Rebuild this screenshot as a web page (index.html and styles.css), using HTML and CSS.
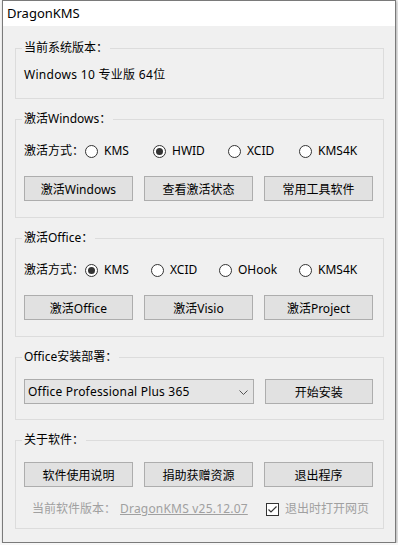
FILE: index.html
```html
<!DOCTYPE html>
<html lang="zh-CN">
<head>
    <meta charset="UTF-8">
    <meta name="viewport" content="width=device-width, initial-scale=1.0">
    <title>DragonKMS</title>
    <link rel="stylesheet" href="styles.css">
</head>
<body>

    <div class="window">
        <div class="titlebar">DragonKMS</div>

        <div class="client">

            <!-- system version -->
            <fieldset class="group group-system">
                <legend>当前系统版本：</legend>
                <div class="os-name">Windows 10 专业版 64位</div>
            </fieldset>

            <!-- windows activation -->
            <fieldset class="group group-activate">
                <legend>激活Windows：</legend>
                <div class="mode-row win-modes">
                    <span class="mode-label">激活方式：</span>
                    <span class="radio"><span class="radio-dot"></span>KMS</span>
                    <span class="radio checked"><span class="radio-dot"></span>HWID</span>
                    <span class="radio"><span class="radio-dot"></span>XCID</span>
                    <span class="radio"><span class="radio-dot"></span>KMS4K</span>
                </div>
                <div class="btn-row">
                    <button class="btn">激活Windows</button>
                    <button class="btn">查看激活状态</button>
                    <button class="btn">常用工具软件</button>
                </div>
            </fieldset>

            <!-- office activation -->
            <fieldset class="group group-activate">
                <legend>激活Office：</legend>
                <div class="mode-row office-modes">
                    <span class="mode-label">激活方式：</span>
                    <span class="radio checked"><span class="radio-dot"></span>KMS</span>
                    <span class="radio"><span class="radio-dot"></span>XCID</span>
                    <span class="radio"><span class="radio-dot"></span>OHook</span>
                    <span class="radio"><span class="radio-dot"></span>KMS4K</span>
                </div>
                <div class="btn-row">
                    <button class="btn">激活Office</button>
                    <button class="btn">激活Visio</button>
                    <button class="btn">激活Project</button>
                </div>
            </fieldset>

            <!-- office deploy -->
            <fieldset class="group group-deploy">
                <legend>Office安装部署：</legend>
                <div class="btn-row">
                    <div class="combo">
                        <span>Office Professional Plus 365</span>
                        <svg class="combo-arrow" width="9" height="5" viewBox="0 0 9 5">
                            <polyline points="0.5,0.5 4.5,4.5 8.5,0.5" fill="none" stroke="#555" stroke-width="1"/>
                        </svg>
                    </div>
                    <button class="btn">开始安装</button>
                </div>
            </fieldset>

            <!-- about -->
            <fieldset class="group group-about">
                <legend>关于软件：</legend>
                <div class="btn-row">
                    <button class="btn">软件使用说明</button>
                    <button class="btn">捐助获赠资源</button>
                    <button class="btn">退出程序</button>
                </div>
                <div class="footer-row">
                    <span class="version">当前软件版本：<a class="version-link" href="#">DragonKMS v25.12.07</a></span>
                    <span class="check">
                        <span class="check-box">
                            <svg width="11" height="11" viewBox="0 0 11 11">
                                <polyline points="1.5,5.5 4,8 9.5,2.5" fill="none" stroke="#333" stroke-width="1.2"/>
                            </svg>
                        </span>
                        退出时打开网页
                    </span>
                </div>
            </fieldset>

        </div>
    </div>

</body>
</html>
```

FILE: styles.css
```css
body {
    margin: 0;
    padding-left: 2px;
    background: #f7f7f7;
    font-family: "Segoe UI", "Noto Sans", "Noto Sans CJK SC", sans-serif;
    font-size: 12px;
    color: #000;
}
.window {
    width: 394px;
    height: 543px;
    box-sizing: border-box;
    border: 1px solid #7a7a7a;
    background: #f0f0f0;
    box-shadow: 1px 1px 3px rgba(0, 0, 0, 0.3);
}
.titlebar {
    height: 25px;
    line-height: 25px;
    padding-left: 4px;
    background: #fff;
    font-size: 13px;
}
.client {
    padding-top: 14px;
}

/* group boxes */
.group {
    width: 369px;
    box-sizing: border-box;
    margin: 0 0 12px 12px;
    border: 1px solid #dcdcdc;
    padding: 0 10px 0 8px;
    min-inline-size: 0;
}
.group legend {
    padding: 0 2px;
    margin-left: -2px;
    line-height: 16px;
    height: 16px;
}
.group-system {
    padding-top: 11px;
    padding-bottom: 15px;
}
.group-activate {
    padding-top: 16px;
    padding-bottom: 16px;
}
.group-deploy {
    padding-top: 14px;
    padding-bottom: 15px;
}
.group-about {
    padding-top: 14px;
    padding-bottom: 11px;
}
.os-name {
    line-height: 16px;
    height: 16px;
    letter-spacing: 0.3px;
}

/* radio rows */
.mode-row {
    display: grid;
    height: 16px;
    line-height: 16px;
    margin-bottom: 17px;
}
.win-modes {
    grid-template-columns: 61px 68px 75px 71px auto;
}
.office-modes {
    grid-template-columns: 61px 66px 68px 80px auto;
}
.radio {
    display: flex;
    align-items: center;
    gap: 6px;
    white-space: nowrap;
}
.radio-dot {
    width: 13px;
    height: 13px;
    box-sizing: border-box;
    border: 1px solid #333;
    border-radius: 50%;
    background: #fff;
    display: flex;
    align-items: center;
    justify-content: center;
    flex: none;
}
.radio.checked .radio-dot::after {
    content: "";
    width: 7px;
    height: 7px;
    border-radius: 50%;
    background: #333;
}

/* buttons */
.btn-row {
    display: flex;
    gap: 11px;
}
.btn {
    width: 109px;
    height: 25px;
    box-sizing: border-box;
    margin: 0;
    padding: 0;
    border: 1px solid #adadad;
    background: #e1e1e1;
    font-family: inherit;
    font-size: 12px;
    color: #000;
}

/* combo */
.combo {
    width: 231px;
    height: 25px;
    box-sizing: border-box;
    border: 1px solid #acacac;
    background: #e5e5e5;
    display: flex;
    align-items: center;
    justify-content: space-between;
    padding: 0 5px 0 3px;
    letter-spacing: 0.2px;
}
.combo-arrow {
    margin-top: 1px;
}

/* footer */
.footer-row {
    display: flex;
    align-items: center;
    height: 16px;
    line-height: 16px;
    margin-top: 14px;
    color: #a0a0a0;
}
.version {
    width: 234px;
    padding-left: 8px;
    white-space: nowrap;
}
.version-link {
    color: #a0a0a0;
    text-decoration: underline;
    margin-left: 4px;
    letter-spacing: 0.2px;
}
.check {
    display: flex;
    align-items: center;
    gap: 6px;
}
.check-box {
    width: 13px;
    height: 13px;
    box-sizing: border-box;
    border: 1px solid #333;
    background: #fff;
    display: flex;
    align-items: center;
    justify-content: center;
}
```
